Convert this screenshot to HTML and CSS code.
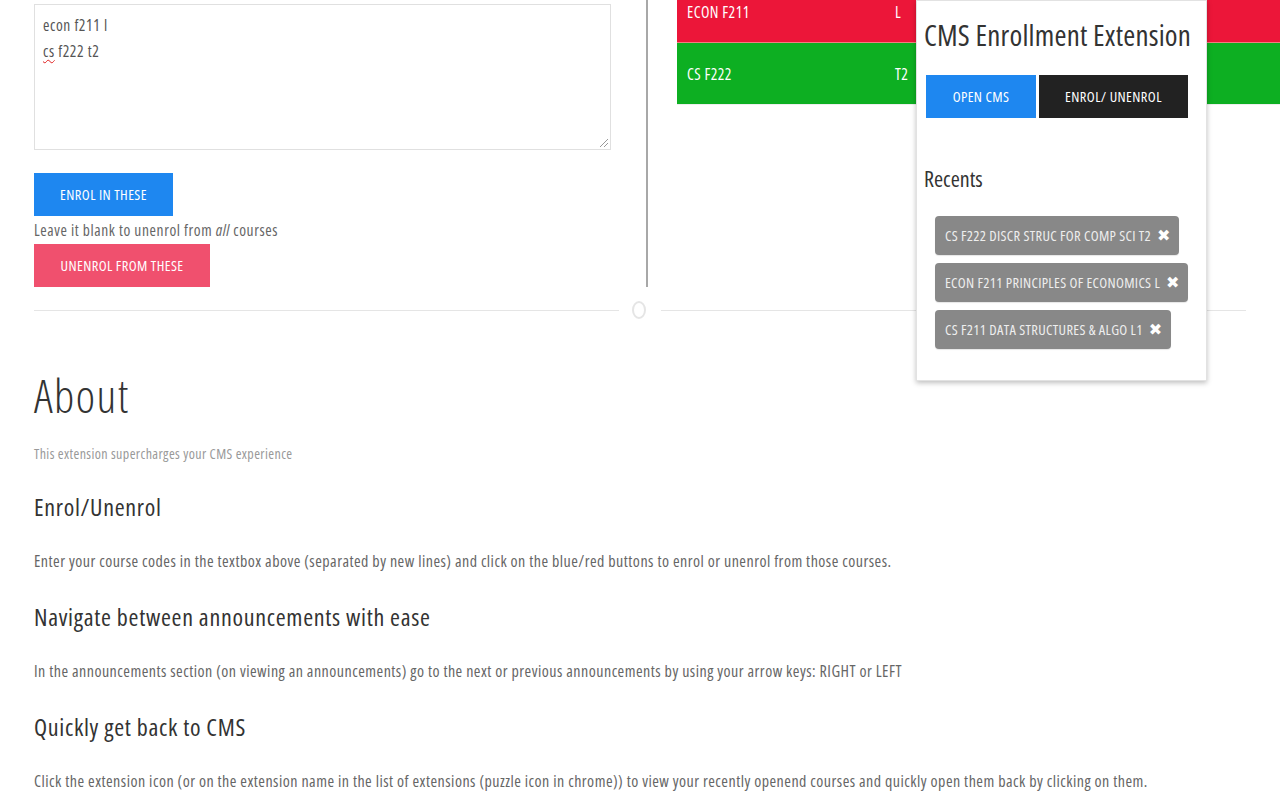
FILE: index.html
```html
<!DOCTYPE html>
<html>
<head>
<meta charset="utf-8">
<link rel="stylesheet" href="styles.css">
</head>
<body>
<div class="top">
  <div class="left">
    <div class="codes">
      <div class="codes-line">econ f211 l</div>
      <div class="codes-line"><span class="misspelt">cs</span> f222 t2</div>
      <span class="grip"></span>
    </div>
    <button class="btn btn-primary enrol-btn">Enrol in these</button>
    <p class="hint">Leave it blank to unenrol from <em>all</em> courses</p>
    <button class="btn btn-danger">Unenrol from these</button>
  </div>
  <div class="vline"></div>
  <div class="right">
    <div class="course-table">
      <div class="course-row row-red"><span class="c-code">ECON F211</span><span class="c-sec">L</span></div>
      <div class="course-row row-green"><span class="c-code">CS F222</span><span class="c-sec">T2</span></div>
    </div>
  </div>
</div>

<div class="divider-icon">
  <span class="dline"></span><span class="dcircle"></span><span class="dline"></span>
</div>

<section class="about">
  <h1 class="about-title">About</h1>
  <p class="meta">This extension supercharges your CMS experience</p>
  <h3 class="sub">Enrol/Unenrol</h3>
  <p class="text">Enter your course codes in the textbox above (separated by new lines) and click on the blue/red buttons to enrol or unenrol from those courses.</p>
  <h3 class="sub">Navigate between announcements with ease</h3>
  <p class="text">In the announcements section (on viewing an announcements) go to the next or previous announcements by using your arrow keys: RIGHT or LEFT</p>
  <h3 class="sub">Quickly get back to CMS</h3>
  <p class="text">Click the extension icon (or on the extension name in the list of extensions (puzzle icon in chrome)) to view your recently openend courses and quickly open them back by clicking on them.</p>
</section>

<div class="popup">
  <h2 class="popup-title">CMS Enrollment Extension</h2>
  <div class="popup-btns">
    <button class="btn btn-primary pbtn">Open CMS</button>
    <button class="btn btn-dark pbtn">Enrol/ Unenrol</button>
  </div>
  <h3 class="recents-title">Recents</h3>
  <div class="chips">
    <div class="chip"><span>CS F222 DISCR STRUC FOR COMP SCI T2</span><span class="x">✖</span></div>
    <div class="chip"><span>ECON F211 PRINCIPLES OF ECONOMICS L</span><span class="x">✖</span></div>
    <div class="chip"><span>CS F211 DATA STRUCTURES &amp; ALGO L1</span><span class="x">✖</span></div>
  </div>
</div>
</body>
</html>
```

FILE: styles.css
```css
html, body {
  margin: 0;
  padding: 0;
  background: #fff;
  overflow: hidden;
}
body {
  font-family: "Open Sans", "Noto Sans", sans-serif;
  font-stretch: 75%;
  letter-spacing: 0.5px;
  color: #666;
  font-size: 15px;
  width: 1280px;
  height: 800px;
  position: relative;
}
.top {
  display: flex;
  align-items: flex-start;
  padding-left: 34px;
}
.left {
  width: 577px;
  padding-top: 4px;
}
.codes {
  position: relative;
  height: 146px;
  box-sizing: border-box;
  border: 1px solid #e0e0e0;
  padding: 7px 8px;
  font-size: 15.5px;
  letter-spacing: 0.6px;
  line-height: 26px;
  color: #555;
}
.misspelt {
  text-decoration: underline wavy #e02020;
  text-decoration-thickness: 1px;
  text-underline-offset: 2px;
}
.grip {
  position: absolute;
  right: 2px;
  bottom: 2px;
  width: 8px;
  height: 8px;
  background: linear-gradient(135deg, transparent 45%, #999 46%, #999 52%, transparent 53%, transparent 70%, #999 71%, #999 77%, transparent 78%);
}
.btn {
  display: inline-flex;
  align-items: center;
  justify-content: center;
  border: 0;
  margin: 0;
  height: 43px;
  padding: 0 10px;
  font-family: inherit;
  font-stretch: 75%;
  font-size: 14.5px;
  letter-spacing: 0.4px;
  text-transform: uppercase;
  color: #fff;
  cursor: pointer;
}
.btn-primary { background: #1e87f0; }
.btn-danger { background: #f0506e; }
.btn-dark { background: #222; }
.enrol-btn {
  margin-top: 23px;
  width: 139px;
}
.btn-danger { width: 176px; }
.hint {
  margin: 0;
  line-height: 28px;
  font-size: 15.5px;
  letter-spacing: 0.6px;
  color: #666;
}
.hint em { font-style: italic; }
.vline {
  width: 2px;
  height: 287px;
  background: #a8a8a8;
  margin-left: 35px;
}
.right {
  flex: 1;
  margin-left: 29px;
}
.course-table {
  margin-top: -19px;
}
.course-row {
  display: flex;
  align-items: center;
  height: 61px;
  color: #fff;
  font-size: 15.5px;
  letter-spacing: 0.45px;
}
.row-red { background: #ec1639; border-bottom: 1px solid #f08080; }
.row-green { background: #0daf22; border-bottom: 1px solid #eee; }
.c-code { width: 208px; padding-left: 10px; }
.c-sec { padding-left: 0; }

.divider-icon {
  display: flex;
  align-items: center;
  margin: 14px 34px 0 34px;
  height: 18px;
}
.dline {
  flex: 1;
  height: 1px;
  background: #e5e5e5;
}
.dcircle {
  width: 10px;
  height: 14px;
  border: 2px solid #e5e5e5;
  border-radius: 50%;
  margin: 0 15px 0 13px;
}

.about {
  padding: 0 34px;
}
.about-title {
  margin: 48px 0 0 0;
  font-size: 46px;
  line-height: 56px;
  font-weight: 300;
  letter-spacing: 1.5px;
  color: #333;
}
.meta {
  margin: 21px 0 0 0;
  font-size: 14px;
  line-height: 20px;
  letter-spacing: 0.4px;
  color: #999;
}
.sub {
  margin: 27px 0 0 0;
  font-size: 24px;
  line-height: 32px;
  font-weight: 400;
  letter-spacing: 0.7px;
  color: #333;
}
.text {
  margin: 27px 0 0 0;
  font-size: 16px;
  line-height: 22px;
  letter-spacing: 0.48px;
  color: #666;
}
.text + .sub { margin-top: 29px; }

.popup {
  position: absolute;
  left: 916px;
  top: 0;
  width: 291px;
  height: 381px;
  box-sizing: border-box;
  background: #fff;
  border: 1px solid #e2e2e2;
  box-shadow: 0 2px 5px rgba(0,0,0,0.25);
  padding: 0 0 0 7px;
}
.popup-title {
  margin: 14px 0 0 0;
  font-size: 29px;
  line-height: 40px;
  font-weight: 400;
  letter-spacing: 0.2px;
  color: #333;
}
.popup-btns {
  display: flex;
  gap: 3px;
  margin-top: 20px;
  padding-left: 2px;
}
.pbtn { padding: 0; }
.pbtn.btn-primary { width: 110px; }
.pbtn.btn-dark { width: 149px; }
.recents-title {
  margin: 45px 0 0 0;
  font-size: 22px;
  line-height: 30px;
  font-weight: 400;
  letter-spacing: 0;
  color: #333;
}
.chips {
  display: flex;
  flex-direction: column;
  align-items: flex-start;
  gap: 8px;
  margin: 23px 0 0 11px;
}
.chip {
  display: flex;
  align-items: center;
  gap: 6px;
  height: 39px;
  padding: 0 9px 0 10px;
  background: #888;
  border-radius: 4px;
  color: #eeeeee;
  font-size: 14.5px;
  letter-spacing: 0.32px;
  box-shadow: 0 1px 1px rgba(0,0,0,0.1);
}
.chip .x {
  font-size: 16px;
  color: #fff;
  font-weight: 700;
  font-stretch: 100%;
  letter-spacing: 0;
  font-family: "DejaVu Sans", sans-serif;
}
```
